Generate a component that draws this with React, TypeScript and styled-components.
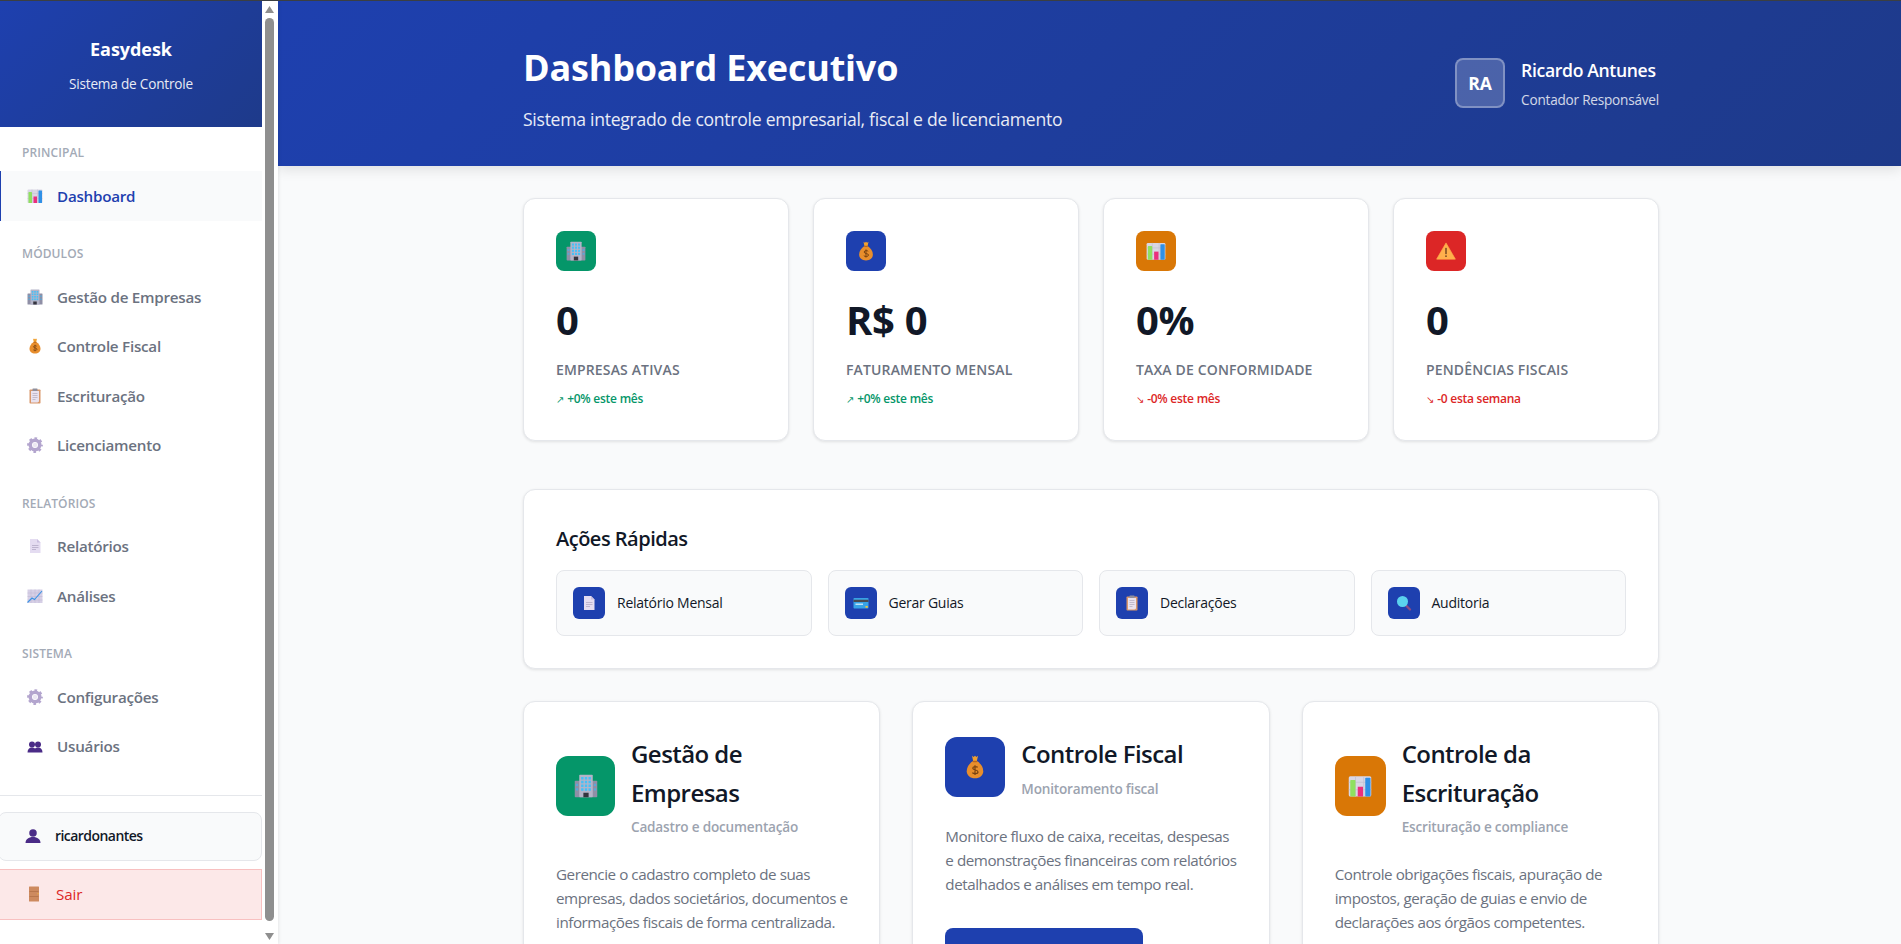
import React from "react";
import styled, { createGlobalStyle } from "styled-components";

const Global = createGlobalStyle`
  html, body { margin: 0; padding: 0; height: 100%; overflow: hidden; background: #f9fafb; }
  body { font-family: "Open Sans", "Noto Sans", "DejaVu Sans", sans-serif; line-height: 1.6; color: #111827; }
  * { box-sizing: border-box; }
`;

const Shell = styled.div`
  display: flex;
  height: 944px;
  overflow: hidden;
  border-top: 1px solid #3b3f42;
`;
const Sidebar = styled.aside`
  display: flex;
  flex: 0 0 278px;
  background: #fff;
  box-shadow: 1px 0 3px rgba(0, 0, 0, 0.08);
  position: relative;
  z-index: 2;
`;
const SideBody = styled.div`
  width: 262px;
  display: flex;
  flex-direction: column;
`;
const Brand = styled.div`
  height: 126px;
  padding-top: 34px;
  text-align: center;
  color: #fff;
  background: linear-gradient(135deg, #1e40af 0%, #1e3a8a 100%);
`;
const BrandName = styled.div`
  font-size: 18px;
  font-weight: 700;
  line-height: 29px;
  letter-spacing: -0.05px;
`;
const BrandSub = styled.div`
  font-size: 13.6px;
  line-height: 22px;
  margin-top: 9px;
  opacity: 0.9;
  letter-spacing: -0.2px;
`;
const Nav = styled.nav`
  padding-top: 16px;
`;
const Section = styled.section`
  margin-bottom: 23.5px;
`;
const SectionLabel = styled.div`
  padding-left: 22px;
  font-size: 12px;
  font-weight: 600;
  line-height: 19px;
  margin-bottom: 9px;
  color: #a3aab6;
  text-transform: uppercase;
  letter-spacing: 0.1px;
`;
const NavItem = styled.a<{ $active?: boolean }>`
  display: flex;
  align-items: center;
  height: 49.5px;
  padding-left: ${(p) => (p.$active ? 26 : 27)}px;
  gap: 14px;
  font-size: 15.2px;
  font-weight: 600;
  letter-spacing: -0.25px;
  color: ${(p) => (p.$active ? "#1e40af" : "#6b7280")};
  background: ${(p) => (p.$active ? "#f9fafb" : "transparent")};
  border-left: ${(p) => (p.$active ? "1px solid #1e40af" : "none")};
`;
const Footer = styled.div`
  border-top: 1px solid #e5e7eb;
  padding-top: 16px;
  display: flex;
  flex-direction: column;
  gap: 8px;
`;
const UserBox = styled.div`
  height: 49px;
  margin-left: -2px;
  width: 264px;
  display: flex;
  align-items: center;
  gap: 14px;
  padding-left: 26px;
  background: #f9fafb;
  border: 1px solid #e5e7eb;
  border-radius: 8px;
  font-size: 14px;
  font-weight: 600;
  letter-spacing: -0.55px;
  color: #111827;
`;
const LogoutBox = styled.div`
  height: 51px;
  margin-left: -1px;
  width: 263px;
  display: flex;
  align-items: center;
  gap: 14px;
  padding-left: 26px;
  background: #fce8e8;
  border: 1px solid #f8c0c0;
  font-size: 15.2px;
  font-weight: 500;
  letter-spacing: -0.1px;
  color: #dc2626;
`;
const Scrollbar = styled.div`
  width: 16px;
  display: flex;
  flex-direction: column;
  align-items: center;
  padding: 5px 4px 2px 3px;
`;
const Thumb = styled.div`
  width: 9px;
  height: 903px;
  margin: 5px 0 12px;
  background: #8f8f8f;
  border-radius: 4.5px;
`;

const Main = styled.main`
  flex: 1;
  min-width: 0;
  height: 100%;
  overflow: hidden;
`;
const PageHeader = styled.header`
  height: 165px;
  color: #fff;
  background: linear-gradient(135deg, #1e40af 0%, #1e3a8a 100%);
  box-shadow: 0 4px 12px rgba(0, 0, 0, 0.1);
  position: relative;
`;
const Wrap = styled.div`
  width: 1200px;
  margin-left: 213px;
  padding: 0 32px;
`;
const HeaderRow = styled(Wrap)`
  height: 165px;
  display: flex;
  justify-content: space-between;
  align-items: flex-start;
  padding-top: 38px;
`;
const PageTitle = styled.h1`
  margin: 0;
  font-size: 36px;
  font-weight: 700;
  line-height: 57.6px;
  letter-spacing: -0.2px;
`;
const PageSub = styled.p`
  margin: 8.5px 0 0;
  font-size: 17.6px;
  line-height: 28px;
  opacity: 0.9;
  letter-spacing: -0.28px;
`;
const UserArea = styled.div`
  display: flex;
  gap: 16px;
  margin-top: 19px;
`;
const Avatar = styled.div`
  width: 50px;
  height: 50px;
  display: flex;
  align-items: center;
  justify-content: center;
  font-size: 17.6px;
  font-weight: 700;
  border-radius: 8px;
  background: rgba(255, 255, 255, 0.2);
  border: 2px solid rgba(255, 255, 255, 0.3);
`;
const UserName = styled.div`
  font-size: 17.6px;
  font-weight: 600;
  line-height: 26px;
  margin-top: -1px;
  letter-spacing: -0.35px;
`;
const UserRole = styled.div`
  font-size: 13.6px;
  line-height: 22px;
  margin-top: 6px;
  opacity: 0.8;
  letter-spacing: -0.22px;
`;
const Content = styled(Wrap)`
  padding-top: 32px;
`;
const StatsGrid = styled.div`
  display: grid;
  grid-template-columns: repeat(4, minmax(0, 1fr));
  gap: 24px;
  margin-bottom: 48px;
`;
const Card = styled.div`
  background: #fff;
  border: 1px solid #e5e7eb;
  border-radius: 12px;
  padding: 32px;
  box-shadow: 0 1px 3px rgba(0, 0, 0, 0.1);
`;
const StatCard = styled(Card)`
  padding-bottom: 31px;
`;
const IconTile = styled.div<{ $bg: string; $w: number; $h: number; $r?: number }>`
  flex: 0 0 auto;
  width: ${(p) => p.$w}px;
  height: ${(p) => p.$h}px;
  display: flex;
  align-items: center;
  justify-content: center;
  background: ${(p) => p.$bg};
  border-radius: ${(p) => p.$r ?? 8}px;
`;
const StatValue = styled.div`
  margin-top: 20px;
  font-size: 40px;
  font-weight: 700;
  line-height: 57.6px;
  letter-spacing: -0.3px;
  color: #111827;
`;
const StatLabel = styled.div`
  margin-top: 10px;
  font-size: 14px;
  font-weight: 600;
  line-height: 22.4px;
  letter-spacing: 0.15px;
  color: #6b7280;
  text-transform: uppercase;
`;
const StatChange = styled.div<{ $up: boolean }>`
  margin-top: 8px;
  font-size: 12px;
  font-weight: 600;
  line-height: 19.2px;
  letter-spacing: -0.25px;
  color: ${(p) => (p.$up ? "#059669" : "#dc2626")};
`;
const Arrow = styled.span`
  font-family: "DejaVu Sans", sans-serif;
  font-size: 10px;
  font-weight: 400;
  margin-right: 3px;
`;
const QuickCard = styled(Card)`
  margin-bottom: 32px;
`;
const QuickTitle = styled.h3`
  margin: 0 0 15px;
  padding-top: 1px;
  font-size: 20px;
  font-weight: 600;
  line-height: 32px;
  letter-spacing: -0.5px;
  color: #111827;
`;
const QuickGrid = styled.div`
  display: grid;
  grid-template-columns: repeat(4, minmax(0, 1fr));
  gap: 16px;
`;
const QuickItem = styled.div`
  display: flex;
  align-items: center;
  gap: 12px;
  padding: 16px;
  background: #f9fafb;
  border: 1px solid #e5e7eb;
  border-radius: 8px;
  font-size: 14px;
  font-weight: 500;
  letter-spacing: -0.25px;
  color: #111827;
`;
const ModuleGrid = styled.div`
  display: grid;
  grid-template-columns: repeat(3, minmax(0, 1fr));
  gap: 32px;
`;
const ModuleHead = styled.div`
  display: flex;
  align-items: center;
  gap: 16px;
  margin-bottom: 24px;
`;
const ModuleTitle = styled.h3`
  margin: 0;
  padding-top: 1px;
  font-size: 24px;
  font-weight: 600;
  line-height: 38.4px;
  letter-spacing: -0.55px;
  color: #111827;
`;
const ModuleSub = styled.div`
  margin-top: 4px;
  font-size: 13.6px;
  font-weight: 600;
  line-height: 22.4px;
  letter-spacing: -0.2px;
  color: #9ca3af;
`;
const ModuleText = styled.p`
  margin: 0 0 32px;
  font-size: 15.2px;
  line-height: 24px;
  letter-spacing: -0.45px;
  color: #6b7280;
  white-space: pre;
`;
const ModuleButton = styled.button`
  display: block;
  width: 198px;
  height: 48px;
  border: none;
  border-radius: 8px;
  background: #1e40af;
`;

const Svg: React.FC<{ s: number; children: React.ReactNode }> = ({ s, children }) => (
  <svg width={s} height={s} viewBox="0 0 32 32" style={{ flex: "0 0 auto", display: "block" }}>
    {children}
  </svg>
);
type Ic = React.FC<{ s: number }>;

const ChartIcon: Ic = ({ s }) => (
  <Svg s={s}>
    <rect x="1" y="3" width="30" height="27" rx="2" fill="#d9d6e4" />
    <path d="M1 11h30M1 21h30M10 3v27M21 3v27" stroke="#c2bfd0" strokeWidth="1" />
    <rect x="3" y="8" width="7" height="22" rx="1" fill="#8fe060" />
    <rect x="13" y="17" width="7" height="13" fill="#ea2f7d" />
    <rect x="23" y="5" width="7" height="25" rx="1" fill="#2f90e6" />
  </Svg>
);
const BuildingIcon: Ic = ({ s }) => (
  <Svg s={s}>
    <rect x="1" y="9" width="30" height="22" rx="1" fill="#8f8fa6" />
    <rect x="7" y="1" width="18" height="30" rx="1" fill="#b4b4c8" />
    {[4, 9, 14, 19].map((y) =>
      [9.5, 14.4, 19.3].map((x) => <rect key={`${x}-${y}`} x={x} y={y} width="3.200" height="3.400" fill="#45c0f7" />)
    )}
    <rect x="2.500" y="13" width="3" height="3" fill="#5aa9d8" />
    <rect x="2.500" y="19" width="3" height="3" fill="#5aa9d8" />
    <rect x="26.500" y="13" width="3" height="3" fill="#5aa9d8" />
    <rect x="26.500" y="19" width="3" height="3" fill="#5aa9d8" />
    <rect x="12.500" y="25" width="7" height="6" fill="#35353f" />
  </Svg>
);
const BagIcon: Ic = ({ s }) => (
  <Svg s={s}>
    <path d="M12 1l2.200 1.600L16 1l1.800 1.600L20 1l-1.500 7h-5z" fill="#f0a030" />
    <path d="M13.500 8h5C23.500 11 27 16 27 21.500C27 27 22.500 31 16 31S5 27 5 21.500C5 16 8.500 11 13.500 8z" fill="#e88e2c" />
    <rect x="13" y="7.500" width="6" height="2" rx="1" fill="#b9651b" />
    <path d="M19.500 16.500c-1-1.500-6.500-1.800-6.500 1.200 0 3 7 1.600 7 4.800 0 3-6.200 2.800-7.500 1M16 13.500v13" fill="none" stroke="#7a4310" strokeWidth="1.600" />
  </Svg>
);
const ClipIcon: Ic = ({ s }) => (
  <Svg s={s}>
    <rect x="5" y="3" width="22" height="28" rx="1.500" fill="#d9976a" />
    <path d="M8 6h16v21l-3 2H8z" fill="#e9e2ee" />
    <path d="M11 11h10M11 15h10M11 19h10M11 23h6" stroke="#b4aec0" strokeWidth="1.500" />
    <rect x="11" y="1" width="10" height="5" rx="1" fill="#8f8f9c" />
  </Svg>
);
const GearIcon: Ic = ({ s }) => (
  <Svg s={s}>
    <circle cx="16" cy="16" r="9.500" fill="none" stroke="#b3a5ce" strokeWidth="7" />
    <circle cx="16" cy="16" r="13" fill="none" stroke="#b3a5ce" strokeWidth="5.500" strokeDasharray="5.100 5.110" strokeDashoffset="2.550" />
    <circle cx="16" cy="16" r="4.500" fill="#ece8f3" />
  </Svg>
);
const PageIcon: Ic = ({ s }) => (
  <Svg s={s}>
    <path d="M6 2h14l7 7v21H6z" fill="#e4dcf1" />
    <path d="M20 2l7 7h-7z" fill="#cabfe0" />
    <path d="M10 15h13M10 19h13M10 23h8" stroke="#b3a9c6" strokeWidth="1.600" />
  </Svg>
);
const TrendIcon: Ic = ({ s }) => (
  <Svg s={s}>
    <rect x="1" y="3" width="30" height="27" fill="#d6cfe6" />
    <path d="M1 10h30M1 17h30M1 24h30M8 3v27M16 3v27M24 3v27" stroke="#bdb4d2" strokeWidth="1" />
    <path d="M1 29l9-9 5 3L30 6" fill="none" stroke="#3b93e4" strokeWidth="2.200" />
  </Svg>
);
const PeopleIcon: Ic = ({ s }) => (
  <Svg s={s}>
    <circle cx="10" cy="13" r="6" fill="#4a2b87" />
    <circle cx="22" cy="13" r="6" fill="#4a2b87" />
    <path d="M1 29c0-6 3-10 9-10 2.500 0 4.500.7 6 2 1.500-1.300 3.500-2 6-2 6 0 9 4 9 10z" fill="#4a2b87" />
  </Svg>
);
const PersonIcon: Ic = ({ s }) => (
  <Svg s={s}>
    <circle cx="16" cy="10" r="7.500" fill="#4a2b87" />
    <path d="M1 30c0-7 6-12 15-12s15 5 15 12z" fill="#4a2b87" />
  </Svg>
);
const DoorIcon: Ic = ({ s }) => (
  <Svg s={s}>
    <rect x="6" y="1" width="20" height="30" rx="1" fill="#cd8a5f" />
    <path d="M7 11h18M7 21h18" stroke="#b06f46" strokeWidth="1.500" />
    <rect x="22.500" y="14.500" width="3" height="2" fill="#f0b040" />
  </Svg>
);
const CardIcon: Ic = ({ s }) => (
  <Svg s={s}>
    <rect x="1" y="6" width="30" height="21" rx="1.500" fill="#38a3e6" />
    <rect x="1" y="9.500" width="30" height="4.500" fill="#4a4a50" />
    <rect x="5" y="17" width="15" height="3" fill="#bfe4f8" />
    <rect x="25" y="22" width="4.500" height="3.500" fill="#f4c534" />
  </Svg>
);
const LensIcon: Ic = ({ s }) => (
  <Svg s={s}>
    <path d="M19 20l9 9" stroke="#8d4a82" strokeWidth="4.500" strokeLinecap="round" />
    <circle cx="13" cy="13" r="11" fill="#5bd2ee" />
  </Svg>
);
const WarnIcon: Ic = ({ s }) => (
  <Svg s={s}>
    <path d="M16 3L31 29H1z" fill="#ffb04c" stroke="#ffb04c" strokeWidth="1" strokeLinejoin="round" />
    <rect x="14.800" y="11" width="2.400" height="10" fill="#7a4a20" />
    <rect x="14.800" y="23" width="2.400" height="2.600" fill="#7a4a20" />
  </Svg>
);

const nav = [
  { label: "Principal", items: [{ t: "Dashboard", I: ChartIcon, active: true }] },
  {
    label: "Módulos",
    items: [
      { t: "Gestão de Empresas", I: BuildingIcon },
      { t: "Controle Fiscal", I: BagIcon },
      { t: "Escrituração", I: ClipIcon },
      { t: "Licenciamento", I: GearIcon },
    ],
  },
  {
    label: "Relatórios",
    items: [
      { t: "Relatórios", I: PageIcon },
      { t: "Análises", I: TrendIcon },
    ],
  },
  {
    label: "Sistema",
    items: [
      { t: "Configurações", I: GearIcon },
      { t: "Usuários", I: PeopleIcon },
    ],
  },
];

const stats = [
  { bg: "#059669", I: BuildingIcon, v: "0", l: "Empresas Ativas", up: true, c: "+0% este mês" },
  { bg: "#1e40af", I: BagIcon, v: "R$ 0", l: "Faturamento Mensal", up: true, c: "+0% este mês" },
  { bg: "#d97706", I: ChartIcon, v: "0%", l: "Taxa de Conformidade", up: false, c: "-0% este mês" },
  { bg: "#dc2626", I: WarnIcon, v: "0", l: "Pendências Fiscais", up: false, c: "-0 esta semana" },
];
const quick = [
  { t: "Relatório Mensal", I: PageIcon },
  { t: "Gerar Guias", I: CardIcon },
  { t: "Declarações", I: ClipIcon },
  { t: "Auditoria", I: LensIcon },
];
const modules = [
  {
    bg: "#059669", w: 59, I: BuildingIcon, t: "Gestão de Empresas", s: "Cadastro e documentação",
    d: "Gerencie o cadastro completo de suas\nempresas, dados societários, documentos e\ninformações fiscais de forma centralizada.",
  },
  {
    bg: "#1e40af", w: 60, I: BagIcon, t: "Controle Fiscal", s: "Monitoramento fiscal",
    d: "Monitore fluxo de caixa, receitas, despesas\ne demonstrações financeiras com relatórios\ndetalhados e análises em tempo real.",
  },
  {
    bg: "#d97706", w: 51, I: ChartIcon, t: "Controle da Escrituração", s: "Escrituração e compliance",
    d: "Controle obrigações fiscais, apuração de\nimpostos, geração de guias e envio de\ndeclarações aos órgãos competentes.",
  },
];

export default function App() {
  return (
    <Shell>
      <Global />
      <Sidebar>
        <SideBody>
          <Brand>
            <BrandName>Easydesk</BrandName>
            <BrandSub>Sistema de Controle</BrandSub>
          </Brand>
          <Nav>
            {nav.map((sec) => (
              <Section key={sec.label}>
                <SectionLabel>{sec.label}</SectionLabel>
                {sec.items.map((it) => (
                  <NavItem key={it.t} $active={(it as { active?: boolean }).active}>
                    <it.I s={16} />
                    {it.t}
                  </NavItem>
                ))}
              </Section>
            ))}
          </Nav>
          <Footer>
            <UserBox>
              <PersonIcon s={16} />
              ricardonantes
            </UserBox>
            <LogoutBox>
              <DoorIcon s={16} />
              Sair
            </LogoutBox>
          </Footer>
        </SideBody>
        <Scrollbar>
          <svg width="9" height="7" viewBox="0 0 9 7" style={{ display: "block" }}>
            <path d="M4.500 0L9 7H0z" fill="#8f8f8f" />
          </svg>
          <Thumb />
          <svg width="9" height="7" viewBox="0 0 9 7" style={{ display: "block" }}>
            <path d="M0 0h9L4.500 7z" fill="#8f8f8f" />
          </svg>
        </Scrollbar>
      </Sidebar>
      <Main>
        <PageHeader>
          <HeaderRow>
            <div>
              <PageTitle>Dashboard Executivo</PageTitle>
              <PageSub>Sistema integrado de controle empresarial, fiscal e de licenciamento</PageSub>
            </div>
            <UserArea>
              <Avatar>RA</Avatar>
              <div>
                <UserName>Ricardo Antunes</UserName>
                <UserRole>Contador Responsável</UserRole>
              </div>
            </UserArea>
          </HeaderRow>
        </PageHeader>
        <Content>
          <StatsGrid>
            {stats.map((c) => (
              <StatCard key={c.l}>
                <IconTile $bg={c.bg} $w={40} $h={40}>
                  <c.I s={20} />
                </IconTile>
                <StatValue>{c.v}</StatValue>
                <StatLabel>{c.l}</StatLabel>
                <StatChange $up={c.up}>
                  <Arrow>{c.up ? "↗" : "↘"}</Arrow>
                  {c.c}
                </StatChange>
              </StatCard>
            ))}
          </StatsGrid>
          <QuickCard>
            <QuickTitle>Ações Rápidas</QuickTitle>
            <QuickGrid>
              {quick.map((q) => (
                <QuickItem key={q.t}>
                  <IconTile $bg="#1e40af" $w={32} $h={32} $r={6}>
                    <q.I s={16} />
                  </IconTile>
                  {q.t}
                </QuickItem>
              ))}
            </QuickGrid>
          </QuickCard>
          <ModuleGrid>
            {modules.map((m) => (
              <Card key={m.t}>
                <ModuleHead>
                  <IconTile $bg={m.bg} $w={m.w} $h={60} $r={12}>
                    <m.I s={24} />
                  </IconTile>
                  <div>
                    <ModuleTitle>{m.t}</ModuleTitle>
                    <ModuleSub>{m.s}</ModuleSub>
                  </div>
                </ModuleHead>
                <ModuleText>{m.d}</ModuleText>
                <ModuleButton aria-label="Abrir módulo" />
              </Card>
            ))}
          </ModuleGrid>
        </Content>
      </Main>
    </Shell>
  );
}
